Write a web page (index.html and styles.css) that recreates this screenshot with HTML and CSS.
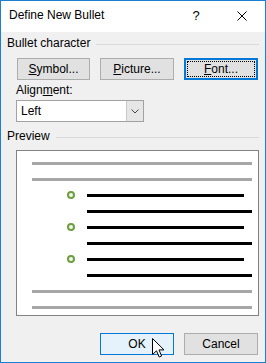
FILE: index.html
```html
<!DOCTYPE html>
<html>
<head>
<meta charset="utf-8">
<link rel="stylesheet" href="styles.css">
</head>
<body>
<div class="window">
  <div class="titlebar">
    <span class="title">Define New Bullet</span>
    <span class="cap cap-help">?</span>
    <span class="cap cap-close"><svg width="10" height="10" viewBox="0 0 10 10"><path d="M0.5 0.5L9.5 9.5M9.5 0.5L0.5 9.5" stroke="#000" stroke-width="1" fill="none"/></svg></span>
  </div>
  <div class="body">
    <div class="group"><span class="group-text">Bullet character</span><span class="rule"></span></div>
    <div class="btn-row">
      <div class="btn btn-symbol"><u>S</u>ymbol...</div>
      <div class="btn"><u>P</u>icture...</div>
      <div class="btn btn-focus"><span class="focus-ring"><u>F</u>ont...</span></div>
    </div>
    <div class="field-label">Align<u>m</u>ent:</div>
    <div class="select">
      <span class="select-value">Left</span>
      <span class="select-arrow"><svg width="8" height="5" viewBox="0 0 8 5"><path d="M0.5 0.5L4 4L7.5 0.5" stroke="#444" stroke-width="1" fill="none"/></svg></span>
    </div>
    <div class="group group-preview"><span class="group-text">Preview</span><span class="rule"></span></div>
    <div class="preview">
      <div class="pl gray"></div>
      <div class="pl gray"></div>
      <div class="pl brow"><span class="bullet"></span><span class="bar bar-short"></span></div>
      <div class="pl black cont"></div>
      <div class="pl brow"><span class="bullet"></span><span class="bar bar-short"></span></div>
      <div class="pl black cont"></div>
      <div class="pl brow"><span class="bullet"></span><span class="bar bar-short"></span></div>
      <div class="pl black cont"></div>
      <div class="pl gray"></div>
      <div class="pl gray"></div>
    </div>
    <div class="footer">
      <div class="btn btn-ok">OK</div>
      <div class="btn">Cancel</div>
    </div>
  </div>
  <svg class="cursor" width="13" height="21" viewBox="0 0 13 21"><path d="M0.5 0.5L0.5 16.5L4.5 12.8L7.2 19L9.6 18L7 11.9L12 11.9Z" fill="#fff" stroke="#000" stroke-width="1" stroke-linejoin="miter"/></svg>
</div>
</body>
</html>
```
FILE: styles.css
```css
* { box-sizing: border-box; }
html, body { margin: 0; padding: 0; }
body {
  font-family: "Liberation Sans", Arial, sans-serif;
  font-size: 12px;
  color: #000;
  background: #fff;
}
.window {
  position: relative;
  width: 266px;
  height: 363px;
  border: 1px solid #1c7fd3;
  display: flex;
  flex-direction: column;
  background: #f0f0f0;
  overflow: hidden;
}
.titlebar {
  height: 31px;
  background: #fff;
  display: flex;
  align-items: flex-start;
}
.title {
  flex: 1;
  padding: 7px 0 0 8px;
  line-height: 15px;
}
.cap {
  width: 46px;
  height: 31px;
  display: flex;
  justify-content: center;
}
.cap-help {
  padding-top: 7px;
  line-height: 15px;
  font-size: 13px;
}
.cap-close {
  padding-top: 10px;
}
.body {
  flex: 1;
  padding: 0 6px 0 6px;
  display: flex;
  flex-direction: column;
}
.group {
  margin-top: 4px;
  display: flex;
  align-items: center;
  line-height: 15px;
  height: 15px;
}
.group-text { white-space: nowrap; }
.rule {
  flex: 1;
  height: 1px;
  background: #dadada;
  margin-left: 6px;
  margin-top: 1px;
}
.group-preview { margin-top: 7px; }
.btn-row {
  margin-top: 7px;
  display: flex;
  gap: 10px;
  margin-left: 10px;
}
.btn {
  width: 74px;
  height: 22px;
  border: 1px solid #adadad;
  background: #e1e1e1;
  display: flex;
  align-items: center;
  justify-content: center;
  line-height: 20px;
}
.btn-symbol { width: 73px; }
.btn-focus {
  border-color: #0078d7;
  box-shadow: inset 0 0 0 1px #0078d7;
  padding: 2px;
}
.focus-ring {
  width: 100%;
  height: 100%;
  border: 1px dotted #000;
  display: flex;
  align-items: center;
  justify-content: center;
  line-height: 14px;
}
.field-label {
  margin-top: 3px;
  margin-left: 9px;
  line-height: 15px;
}
.select {
  margin-top: 2px;
  margin-left: 9px;
  width: 128px;
  height: 22px;
  border: 1px solid #a2a2a2;
  background: #fff;
  display: flex;
}
.select-value {
  flex: 1;
  padding-left: 4px;
  line-height: 20px;
}
.select-arrow {
  width: 17px;
  background: #e6e6e6;
  border-left: 1px solid #c8c8c8;
  display: flex;
  align-items: center;
  justify-content: center;
}
.preview {
  margin-top: 6px;
  margin-left: 9px;
  height: 166px;
  border: 1px solid #828282;
  background: #fff;
  padding: 11px 0 6px 0;
  display: flex;
  flex-direction: column;
  gap: 13px;
}
.pl { height: 3px; flex: none; }
.gray {
  margin-left: 15px;
  width: 220px;
  background: #a6a6a6;
}
.black { background: #000; }
.cont {
  margin-left: 70px;
  width: 165px;
}
.brow {
  display: flex;
  align-items: center;
  padding-left: 50px;
}
.bullet {
  width: 8px;
  height: 8px;
  border-radius: 50%;
  border: 2px solid #6f9e42;
  background: #f4f8ee;
  transform: translateY(-1px);
  flex: none;
}
.bar {
  height: 3px;
  background: #000;
  margin-left: 12px;
}
.bar-short { width: 157px; }
.footer {
  margin-top: 17px;
  display: flex;
  justify-content: flex-end;
  gap: 10px;
  padding-right: 1px;
}
.btn-ok {
  border-color: #0078d7;
  background: #e5f1fb;
}
.cursor {
  position: absolute;
  left: 151px;
  top: 337px;
}
```
